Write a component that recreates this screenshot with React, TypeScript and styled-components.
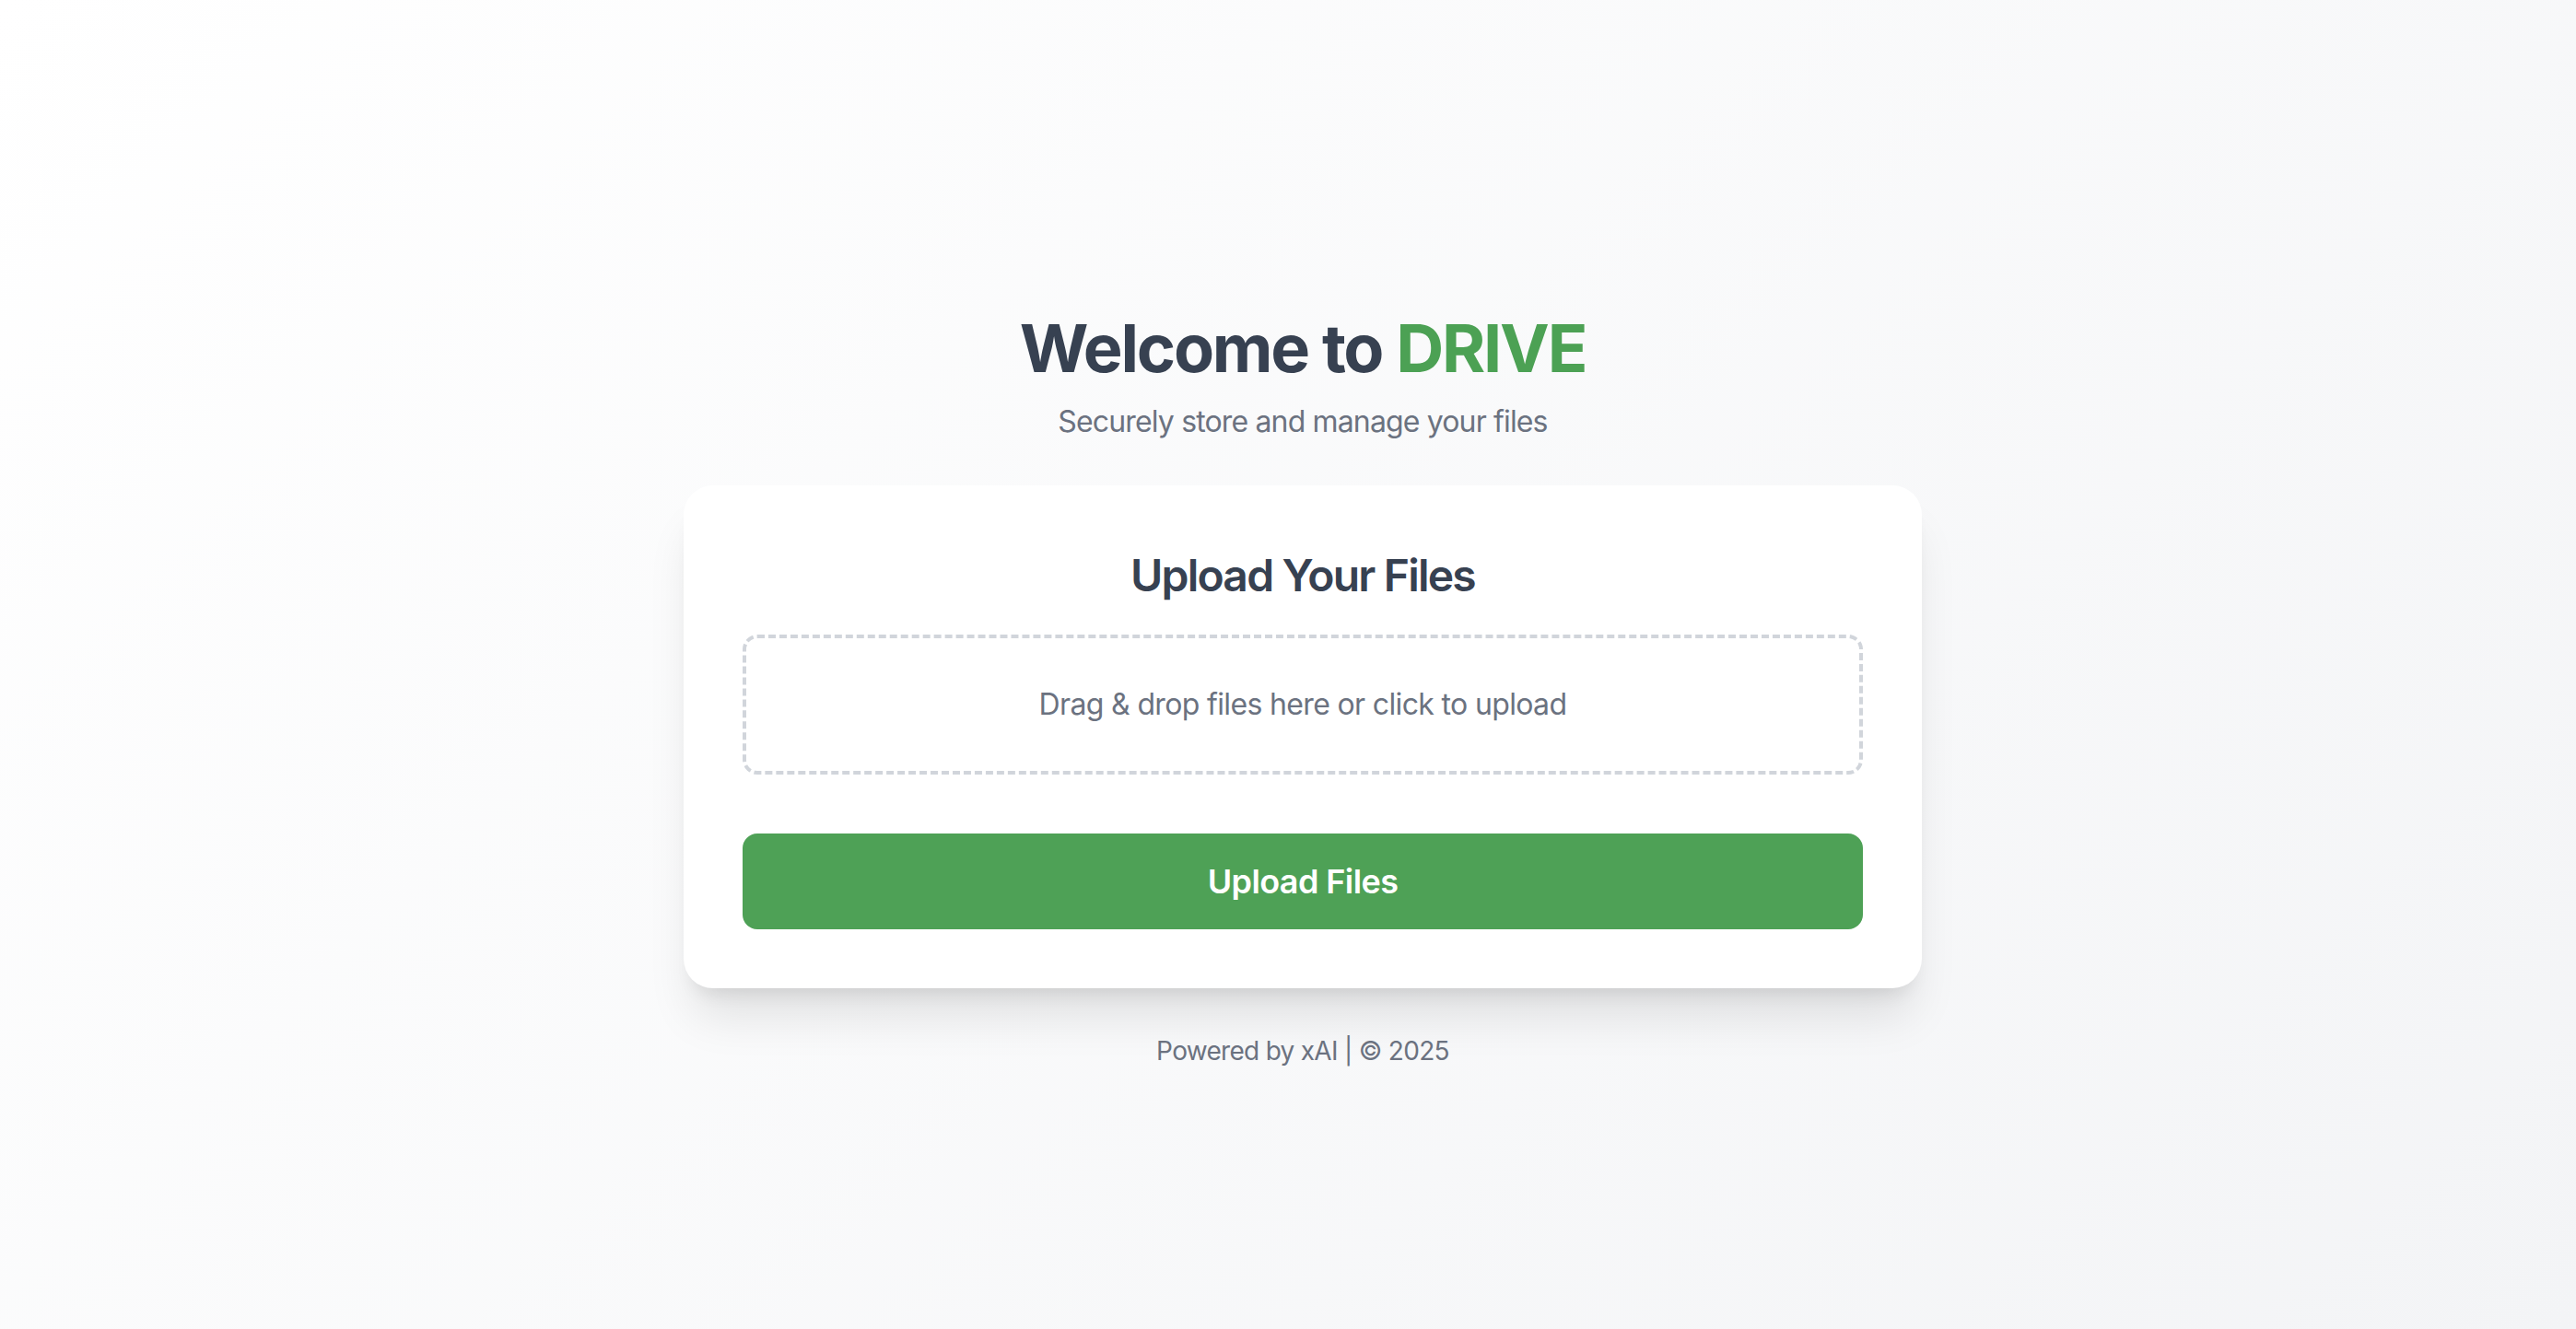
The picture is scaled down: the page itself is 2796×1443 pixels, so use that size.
import React from "react";
import styled, { createGlobalStyle } from "styled-components";

const GlobalStyle = createGlobalStyle`
  * { box-sizing: border-box; }
  html, body { margin: 0; padding: 0; }
  body {
    font-family: Inter, "Noto Sans", "Liberation Sans", sans-serif;
    background: linear-gradient(135deg, #ffffff 0%, #f3f4f6 100%);
    min-height: 100vh;
  }
`;

const Page = styled.main`
  min-height: 100vh;
  display: flex;
  flex-direction: column;
  align-items: center;
  padding: 338px 0 64px 32px;
`;

const Title = styled.h1`
  margin: 0 0 16px;
  font-size: 72px;
  line-height: 80px;
  font-weight: 700;
  color: #374151;
  letter-spacing: -2.2px;
  text-align: center;
`;

const Accent = styled.span`
  color: #4ca154;
`;

const Subtitle = styled.p`
  margin: 0 0 45px;
  font-size: 32px;
  line-height: 48px;
  color: #6b7280;
  letter-spacing: -0.85px;
  text-align: center;
`;

const Card = styled.section`
  width: 1344px;
  background: #ffffff;
  border-radius: 32px;
  padding: 64px;
  box-shadow: 0 40px 50px -10px rgba(0, 0, 0, 0.1),
    0 16px 20px -12px rgba(0, 0, 0, 0.1);
  display: flex;
  flex-direction: column;
`;

const CardTitle = styled.h2`
  margin: 2px 0 32px;
  font-size: 48px;
  line-height: 64px;
  font-weight: 600;
  color: #374151;
  letter-spacing: -1.8px;
  text-align: center;
`;

const DropZone = styled.div`
  border: 4px dashed #d1d5db;
  border-radius: 16px;
  padding: 48px 24px;
  text-align: center;
  font-size: 32px;
  line-height: 48px;
  color: #6b7280;
  letter-spacing: -0.65px;
  cursor: pointer;
`;

const UploadButton = styled.button`
  margin-top: 64px;
  width: 100%;
  height: 104px;
  border: none;
  border-radius: 16px;
  background: #4ea156;
  color: #ffffff;
  font-family: inherit;
  font-size: 36px;
  font-weight: 600;
  letter-spacing: -0.6px;
  cursor: pointer;
`;

const Footer = styled.footer`
  margin-top: 48px;
  font-size: 28px;
  line-height: 40px;
  color: #6b7280;
  letter-spacing: -0.7px;
  text-align: center;
`;

export default function App() {
  return (
    <>
      <GlobalStyle />
      <Page>
        <Title>
          Welcome to <Accent>DRIVE</Accent>
        </Title>
        <Subtitle>Securely store and manage your files</Subtitle>
        <Card>
          <CardTitle>Upload Your Files</CardTitle>
          <DropZone>Drag &amp; drop files here or click to upload</DropZone>
          <UploadButton>Upload Files</UploadButton>
        </Card>
        <Footer>Powered by xAI | © 2025</Footer>
      </Page>
    </>
  );
}
